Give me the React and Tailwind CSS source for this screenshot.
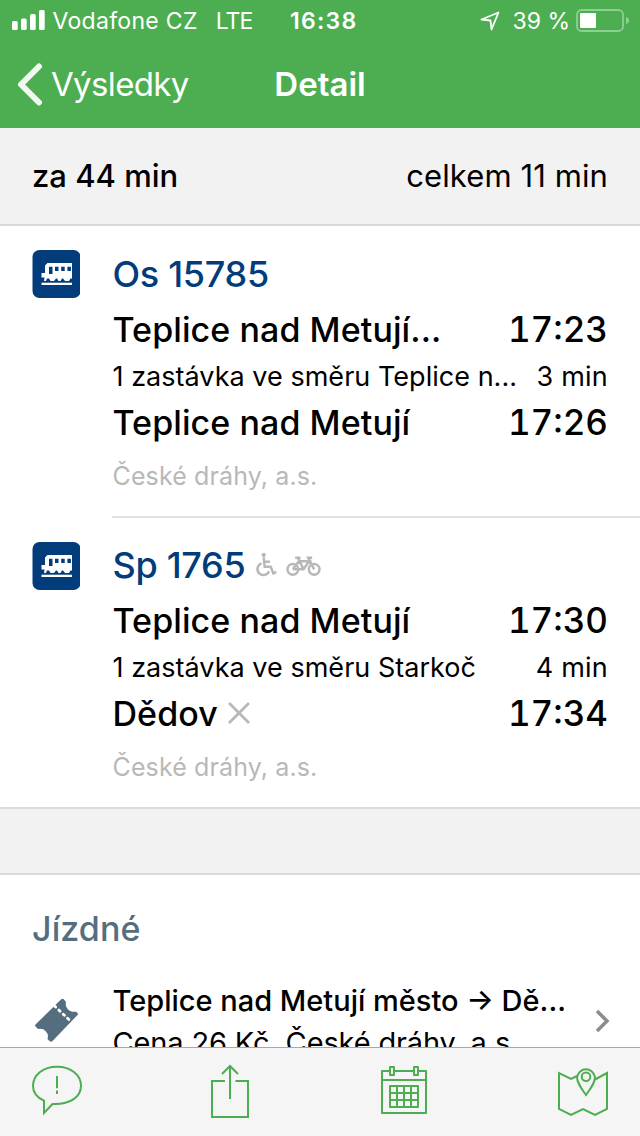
import React from "react";

const connections = [
  {
    line: "Os 15785",
    from: "Teplice nad Metují...",
    departure: "17:23",
    via: "1 zastávka ve směru Teplice n...",
    duration: "3 min",
    to: "Teplice nad Metují",
    arrival: "17:26",
    operator: "České dráhy, a.s.",
  },
  {
    line: "Sp 1765",
    services: true,
    from: "Teplice nad Metují",
    departure: "17:30",
    via: "1 zastávka ve směru Starkoč",
    duration: "4 min",
    to: "Dědov",
    request: true,
    arrival: "17:34",
    operator: "České dráhy, a.s.",
  },
];

const TrainIcon = () => (
  <svg className="size-12" viewBox="0 0 48 48">
    <rect x="0.500" width="48" height="48" rx="7" fill="#033c7a" />
    <path
      d="M15.500 13H40v15.500h-1.500L37 31h-4l-2-2.500h-1L28.500 31h-2L25 28.500h-1L22 31h-3.500L17 28.500h-2L14 31h-2l.5-3.500h-3V23H13v-7.500z"
      fill="#fff"
    />
    <path
      d="M17 16.700h3.500V24H17zM23 16.700h3.500V21H23zM29.200 16.700h3.500V21h-3.500zM35.400 16.700h3.500V21h-3.500z"
      fill="#033c7a"
    />
    <path d="M9.500 32.700H40V35H9.500z" fill="#fff" />
  </svg>
);

const WheelchairIcon = () => (
  <svg className="ml-2.5 h-6 w-[22px]" viewBox="0 0 64 72" fill="none" stroke="#b8b8b8" strokeWidth="7.500">
    <circle cx="25" cy="6" r="6.500" fill="#b8b8b8" stroke="none" />
    <path d="M25 13l3 28h18l8 20 9-4M27 26h17M19 31a18 18 0 1 0 22 24" />
  </svg>
);

const BikeIcon = () => (
  <svg className="ml-[9px] mt-0.5 h-5 w-[35px]" viewBox="0 0 104 60" fill="none" stroke="#b8b8b8" strokeWidth="7.500">
    <circle cx="20" cy="40" r="16" />
    <circle cx="84" cy="40" r="16" />
    <path d="M20 40l18-24h31L52 40H20M35 5l17 35M27 5h16M84 40L66 5h12" />
  </svg>
);

const StatusBar = () => (
  <div className="flex h-[41px] items-center pl-3 pr-2.5 text-[23px]">
    <svg className="mb-0.5 h-5 w-[33px]" viewBox="0 0 33 20" fill="#fff">
      <rect x="0" y="11" width="5.700" height="9" rx="1.500" />
      <rect x="9" y="8.500" width="5.700" height="11.500" rx="1.500" />
      <rect x="18" y="4" width="5.700" height="16" rx="1.500" />
      <rect x="27" y="0" width="5.700" height="20" rx="1.500" />
    </svg>
    <span className="ml-[7.5px] pt-0.5 tracking-[0.3px]">Vodafone CZ</span>
    <span className="ml-[18px] pt-0.5 tracking-[-0.9px]">LTE</span>
    <span className="ml-[37.5px] pt-0.5 font-semibold tracking-[1.3px]">16:38</span>
    <svg
      className="ml-auto h-5 w-5"
      viewBox="0 0 20 20"
      fill="none"
      stroke="#fff"
      strokeWidth="1.800"
      strokeLinejoin="round"
    >
      <path d="M1.500 8.500L18.500 1.500 11.500 18.500 10.500 9.500z" />
    </svg>
    <span className="ml-3 pt-0.5">39 %</span>
    <svg className="ml-1.5 h-6 w-[54px]" viewBox="0 0 54 24">
      <rect x="1" y="1" width="46" height="21" rx="4.500" fill="none" stroke="#8fcf92" strokeWidth="1.800" />
      <rect x="4" y="4" width="16" height="15" rx="1" fill="#fff" />
      <path d="M50 8q3 1 3 3.500T50 15z" fill="#8fcf92" />
    </svg>
  </div>
);

const Connection = ({ item, first }) => (
  <article className="flex pl-8 pt-6">
    <div className="w-[80.5px] shrink-0">
      <TrainIcon />
    </div>
    <div className={first ? "flex-1 pt-px" : "flex-1"}>
      <div className="flex h-12 items-center pb-0.5 text-[36px] font-medium text-[#033c7a]">
        <h2 className="tracking-[-0.3px]">{item.line}</h2>
        {item.services && (
          <>
            <WheelchairIcon />
            <BikeIcon />
          </>
        )}
      </div>
      <div className="flex h-[62px] items-center justify-between pr-8 text-[34px] font-medium">
        <span className="tracking-[0.08px]">{item.from}</span>
        <span className="pb-0.5 text-[35px] tabular-nums">{item.departure}</span>
      </div>
      <div className="flex h-8 items-center justify-between pb-0.5 pr-8 text-[27px]">
        <span className="tracking-[0.03px]">{item.via}</span>
        <span className="tracking-[0.2px]">{item.duration}</span>
      </div>
      <div className="flex h-[60px] items-center pr-8 text-[34px] font-medium">
        <span className="tracking-[0.08px]">{item.to}</span>
        {item.request && (
          <svg className="mb-0.5 ml-2.5 size-[22px]" viewBox="0 0 22 22" stroke="#b8b8b8" strokeWidth="2.800">
            <path d="M1 1l20 20M21 1L1 21" />
          </svg>
        )}
        <span className="ml-auto pb-0.5 text-[35px] tabular-nums">
          {item.arrival}
        </span>
      </div>
      <div className="flex h-[46px] items-center text-[25px] tracking-[0.12px] text-[#b8b8b8]">
        {item.operator}
      </div>
    </div>
  </article>
);

const Toolbar = () => (
  <footer className="flex h-[89px] shrink-0 items-start border-t border-[#a8a8a8] bg-[#f5f5f5] pl-8 pt-4">
    {/* Report */}
    <svg className="h-[54px] w-[50px]" viewBox="0 0 50 54" fill="none" stroke="#4cae50" strokeWidth="2">
      <path d="M12 36.700C4 33 1 28 1 22 1 11 11 2.700 25 2.700s24 8.300 24 19-10 19-28.500 18.300L12 49z" />
      <path d="M25 12v12.300M25 26.500V30" />
    </svg>
    {/* Share */}
    <svg className="ml-32 h-[54px] w-[40px]" viewBox="0 0 40 54" fill="none" stroke="#4cae50" strokeWidth="2">
      <path d="M15 17H2v36h36V17H25.500M20 35V2M12 10l8-8 8 8" />
    </svg>
    {/* Calendar */}
    <svg className="ml-[131px] h-[54px] w-[46px]" viewBox="0 0 46 54" fill="none" stroke="#4cae50" strokeWidth="2" strokeLinejoin="round">
      <path d="M9 7H1v42h44V7h-8M13 7h20M1 16h44" />
      <path d="M9 3h4v8H9zM33 3h4v8h-4zM9 22h28v21H9zM9 29h28M9 36h28M16 22v21M23 22v21M30 22v21" />
    </svg>
    {/* Map */}
    <svg className="ml-[131px] h-[54px] w-[50px]" viewBox="0 0 50 54" fill="none" stroke="#4cae50" strokeWidth="2">
      <path d="M19 12l-6 3L1 9v36l12 6 12-6 12 6 12-6V9l-12 6.500" />
      <path d="M28 31c-5-7-9-12-9-18a9.200 9.800 0 0 1 18 0c0 6-4 11-9 18z" />
      <circle cx="28" cy="12.700" r="4.300" />
    </svg>
  </footer>
);

const App = () => {
  return (
    <div className="flex h-[1136px] w-[640px] flex-col overflow-hidden bg-white font-['Inter',sans-serif] leading-none whitespace-nowrap text-black">
      <header className="h-32 shrink-0 bg-[#4cae50] text-white">
        <StatusBar />
        <div className="grid h-[87px] grid-cols-3 items-center text-[33px]">
          <button className="flex items-center pl-4">
            <svg className="h-11 w-7" viewBox="0 0 28 44" fill="none" stroke="#f1f9f1" strokeWidth="6" strokeLinecap="round" strokeLinejoin="round">
              <path d="M23 3.500L5 21.500l18 18" />
            </svg>
            <span className="ml-[7px] tracking-[-0.65px]">Výsledky</span>
          </button>
          <h1 className="text-center font-semibold">Detail</h1>
        </div>
      </header>

      <main className="min-h-0 flex-1 overflow-hidden">
        <div className="flex h-[98px] items-center justify-between border-b-2 border-[#dadada] bg-[#f2f2f2] pb-px pl-8 pr-8 text-[31px]">
          <span className="font-medium">za 44 min</span>
          <span className="tracking-[0.1px]">celkem 11 min</span>
        </div>

        <Connection item={connections[0]} first />
        <div className="ml-28 mt-[17px] h-0.5 bg-[#e3e3e3]"></div>
        <Connection item={connections[1]} />

        <div className="mt-[17px] h-[68px] border-y-2 border-[#dadada] bg-[#f2f2f2]"></div>

        {/* Fare */}
        <section className="pl-8 pt-8">
          <h2 className="flex h-11 items-center text-[34px] font-medium tracking-[0.1px] text-[#546e7f]">
            Jízdné
          </h2>
          <div className="mt-7 flex items-start">
            <svg className="mt-[18px] h-[47px] w-12" viewBox="0 0 48 47">
              <path
                d="M4 27L29 2.500q1.500-1.500 3 0L34 5a7.800 7.800 0 0 0 9.500 9.500l2 1.500q1 1 0 2L20.500 44q-1.500 1.500-3 0L15.500 42A7.800 7.800 0 0 0 6 32L3.500 29.500q-1-1 .5-2.500z"
                fill="#546e7f"
              />
              <path
                d="M22.500 9L39 24.500"
                stroke="#fff"
                strokeWidth="2.800"
                strokeLinecap="round"
                strokeDasharray="1.600 4.400"
              />
            </svg>
            <div className="ml-[32.5px]">
              <p className="flex h-[42px] items-center text-[29px] font-medium">
                Teplice nad Metují město → Dě...
              </p>
              <p className="flex h-[42px] items-center text-[29px] tracking-[-0.15px]">
                Cena 26 Kč, České dráhy, a.s.
              </p>
            </div>
            <svg className="ml-auto mr-[29px] mt-[30px] h-6 w-4" viewBox="0 0 16 24" fill="none" stroke="#8c8c8c" strokeWidth="3.500">
              <path d="M2 2l10 10L2 22" />
            </svg>
          </div>
        </section>
      </main>

      <Toolbar />
    </div>
  );
};

export default App;
